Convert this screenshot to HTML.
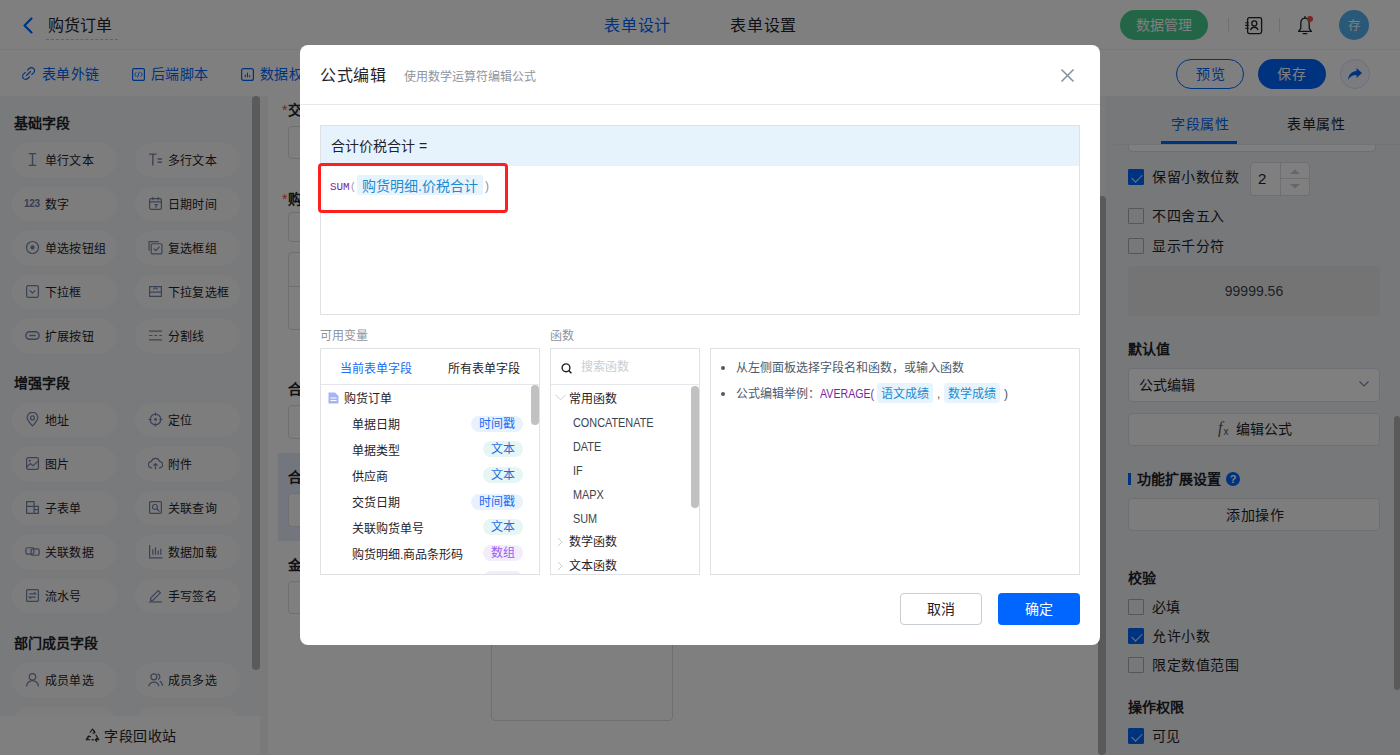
<!DOCTYPE html>
<html lang="zh-CN"><head><meta charset="utf-8">
<style>
*{box-sizing:border-box;margin:0;padding:0}
html,body{width:1400px;height:755px;overflow:hidden;background:#fff}
body{position:relative;font-family:"Liberation Sans",sans-serif;color:#1f2329}
.a{position:absolute}
.t{position:absolute;white-space:nowrap;line-height:20px;height:20px}
/* header */
#hdr{left:0;top:0;width:1400px;height:50px;background:#fff;border-bottom:1px solid #f0f1f3}
#tb{left:0;top:50px;width:1400px;height:46px;background:#fff}
#lp{left:0;top:96px;width:260px;height:659px;background:#f3f4f6}
.pill{position:absolute;width:105px;height:34px;border-radius:17px;background:#fbfbfc}
.pill .ic{position:absolute;left:13px;top:9px;width:15px;height:15px}
.pill .tx{position:absolute;left:33px;top:7.5px;font-size:12px;letter-spacing:0.2px;line-height:20px;white-space:nowrap;color:#1f2329}
.sec{position:absolute;left:14px;font-size:14px;font-weight:bold;line-height:20px;white-space:nowrap;color:#1f2329}
#cv{left:260px;top:96px;width:846px;height:659px;background:#f4f5f7}
#card{left:268px;top:96px;width:830px;height:659px;background:#fff}
#rp{left:1106px;top:96px;width:294px;height:659px;background:#eff0f2}
.cb{position:absolute;width:16px;height:16px;border:1px solid #a8adb5;border-radius:1px;background:transparent}
.cb.on{background:#0066ff;border-color:#0066ff}
.cb.on:after{content:"";position:absolute;left:4.5px;top:1.5px;width:5px;height:9px;border:solid #e8ecf5;border-width:0 1.8px 1.8px 0;transform:rotate(45deg)}
.rt{position:absolute;left:1152px;font-size:14px;line-height:20px;white-space:nowrap;color:#1f2329}
.rh{position:absolute;left:1128px;font-size:14px;font-weight:bold;line-height:20px;white-space:nowrap;color:#1f2329}
.rbtn{position:absolute;left:1128px;width:252px;height:33px;border:1px solid #dcdfe6;border-radius:4px;background:#fafafa}
#mask{left:0;top:0;width:1400px;height:755px;background:rgba(0,0,0,.5)}
#modal{left:300px;top:45px;width:800px;height:600px;background:#fff;border-radius:8px}
.box{position:absolute;border:1px solid #dfe1e5;background:#fff}
.tag{position:absolute;height:16px;line-height:17px;border-radius:8px;font-size:12px;text-align:center;white-space:nowrap}
.tag.ts{background:#e8f1fe;color:#1a6cf5}
.tag.wb{background:#e6f6f4;color:#1f6fe0}
.tag.sz{background:#f2ecfd;color:#9a5ef0}
.vr{position:absolute;left:352px;font-size:12px;line-height:20px;margin-top:1px;white-space:nowrap;color:#1f2329}
.fn{position:absolute;left:573px;font-size:12.5px;line-height:20px;white-space:nowrap;color:#3d434b;margin-top:1px;transform:scaleX(.87);transform-origin:0 0}
</style></head>
<body>
<!-- ===== HEADER ===== -->
<div id="hdr" class="a"></div>
<svg class="a" style="left:22px;top:17px" width="12" height="17" viewBox="0 0 12 17"><path d="M9.5 1.5 L2.5 8.5 L9.5 15.5" fill="none" stroke="#0066ff" stroke-width="2.2" stroke-linecap="round" stroke-linejoin="round"/></svg>
<div class="t" style="left:48px;top:16px;font-size:16px;letter-spacing:0px;color:#1f2329">购货订单</div>
<div class="a" style="left:46px;top:39px;width:72px;border-top:1px dashed #c0c4cc"></div>
<div class="t" style="left:604px;top:16px;font-size:16px;letter-spacing:0.8px;color:#0066ff">表单设计</div>
<div class="t" style="left:730px;top:16px;font-size:16px;letter-spacing:0.8px;color:#1f2329">表单设置</div>
<div class="a" style="left:1120px;top:10px;width:88px;height:30px;border-radius:15px;background:#44cc8e"></div>
<div class="t" style="left:1136px;top:15px;font-size:14px;letter-spacing:0px;color:#fff">数据管理</div>
<div class="a" style="left:1228px;top:18px;width:1px;height:14px;background:#dcdfe6"></div>
<svg class="a" style="left:1244px;top:16px" width="20" height="19" viewBox="0 0 20 19"><rect x="3.6" y="1.6" width="14" height="16" rx="1.8" fill="none" stroke="#1f2329" stroke-width="1.3"/><circle cx="10.3" cy="7.4" r="2.5" fill="none" stroke="#1f2329" stroke-width="1.3"/><path d="M6.6 14.2 A3.8 3.8 0 0 1 14 14.2" fill="none" stroke="#1f2329" stroke-width="1.3"/><path d="M1.2 6.7h3.6M1.2 9.4h3.6M1.2 12.2h3.6" stroke="#1f2329" stroke-width="1.1"/></svg>
<div class="a" style="left:1279px;top:18px;width:1px;height:14px;background:#dcdfe6"></div>
<svg class="a" style="left:1296px;top:15px" width="18" height="20" viewBox="0 0 18 20"><path d="M9 3.2 C6 3.2 4.8 5.4 4.8 8.6 L4.8 13.4 L2.6 16.4 L15.4 16.4 L13.2 13.4 L13.2 8.6 C13.2 5.4 12 3.2 9 3.2Z" fill="none" stroke="#1f2329" stroke-width="1.3" stroke-linejoin="round"/><path d="M7.2 18.6h3.6" stroke="#1f2329" stroke-width="1.3" stroke-linecap="round"/><path d="M9 1.6v1.4" stroke="#1f2329" stroke-width="1.3" stroke-linecap="round"/></svg>
<div class="a" style="left:1306.8px;top:15.8px;width:6.4px;height:6.4px;border-radius:50%;background:#f54a45"></div>
<div class="a" style="left:1339px;top:10px;width:30px;height:30px;border-radius:50%;background:#52b0f2"></div>
<div class="t" style="left:1348px;top:16px;font-size:12.5px;color:#fff">存</div>

<div id="tb" class="a"></div>
<svg class="a" style="left:22px;top:67px" width="13" height="13" viewBox="0 0 13 13"><path d="M5.5 3.2 L7.2 1.5 C8.4 0.3 10.5 0.3 11.6 1.5 C12.7 2.6 12.7 4.6 11.6 5.8 L9.8 7.5" fill="none" stroke="#0066ff" stroke-width="1.1" stroke-linecap="round"/><path d="M7.5 9.8 L5.8 11.5 C4.6 12.7 2.6 12.7 1.5 11.5 C0.3 10.4 0.3 8.4 1.5 7.2 L3.2 5.5" fill="none" stroke="#0066ff" stroke-width="1.1" stroke-linecap="round"/><path d="M4.5 8.5 L8.5 4.5" stroke="#0066ff" stroke-width="1.1" stroke-linecap="round"/></svg>
<div class="t" style="left:42px;top:63.5px;font-size:14px;letter-spacing:0.4px;color:#0066ff">表单外链</div>
<svg class="a" style="left:132px;top:68px" width="13" height="13" viewBox="0 0 13 13"><rect x="0.6" y="0.6" width="11.8" height="11.8" rx="1.2" fill="none" stroke="#0066ff" stroke-width="1.2"/><path d="M4.3 4.2L2.6 6.5 4.3 8.8M8.7 4.2L10.4 6.5 8.7 8.8M7.4 3.6L5.6 9.4" fill="none" stroke="#0066ff" stroke-width="0.9"/></svg>
<div class="t" style="left:151px;top:63.5px;font-size:14px;letter-spacing:0.4px;color:#0066ff">后端脚本</div>
<svg class="a" style="left:241px;top:68px" width="13" height="13" viewBox="0 0 13 13"><rect x="0.6" y="0.6" width="11.8" height="11.8" rx="2" fill="none" stroke="#0066ff" stroke-width="1.2"/><path d="M4.3 9.3V6.8M6.5 9.3V4.8M8.7 9.3V7.3" stroke="#0066ff" stroke-width="1.1"/></svg>
<div class="t" style="left:260px;top:63.5px;font-size:14px;letter-spacing:0.4px;color:#0066ff">数据权限</div>
<div class="a" style="left:1176px;top:59px;width:68px;height:30px;border-radius:15px;border:1px solid #0066ff;background:#fff"></div>
<div class="t" style="left:1196px;top:64px;font-size:14px;letter-spacing:0.5px;color:#0066ff">预览</div>
<div class="a" style="left:1258px;top:59px;width:68px;height:30px;border-radius:15px;background:#0066ff"></div>
<div class="t" style="left:1277px;top:64px;font-size:14px;letter-spacing:0.5px;color:#fff">保存</div>
<div class="a" style="left:1340px;top:59px;width:30px;height:30px;border-radius:50%;border:1px solid #d4e1fb;background:#f7f9fe"></div>
<svg class="a" style="left:1346px;top:65px" width="18" height="18" viewBox="0 0 18 18"><path d="M10.5 3 L16 8 L10.5 13 L10.5 10 C6.5 10 4 11.5 2 15 C2.5 10 5 6.5 10.5 6 Z" fill="#0066ff"/></svg>
<div id="lp" class="a"></div>
<div class="sec" style="top:113px">基础字段</div>
<div class="pill" style="left:12px;top:143px"><svg class="ic" viewBox="0 0 14 14"><path d="M3.5 1.5h7M7 1.5v11M3.5 12.5h7" stroke="#7585ad" stroke-width="1.3" fill="none"/></svg><div class="tx">单行文本</div></div>
<div class="pill" style="left:135px;top:143px"><svg class="ic" viewBox="0 0 14 14"><path d="M1 2h7M4.5 2v10.5M9 6.5h4M9 9.5h4" stroke="#7585ad" stroke-width="1.3" fill="none"/></svg><div class="tx">多行文本</div></div>
<div class="pill" style="left:12px;top:187px"><div class="ic" style="font-family:'Liberation Sans',sans-serif;font-size:10px;font-weight:700;color:#6e7ca3;line-height:14px;left:12px;top:9.5px;width:auto;letter-spacing:-0.3px">123</div><div class="tx">数字</div></div>
<div class="pill" style="left:135px;top:187px"><svg class="ic" viewBox="0 0 14 14"><rect x="1.5" y="2.5" width="11" height="10" rx="1.5" stroke="#7585ad" stroke-width="1.15" fill="none"/><path d="M1.5 5.5h11M4.5 1v3M9.5 1v3M6 8h2.5l-1.5 3" stroke="#7585ad" stroke-width="1.1" fill="none"/></svg><div class="tx">日期时间</div></div>
<div class="pill" style="left:12px;top:231px"><svg class="ic" viewBox="0 0 14 14"><circle cx="7" cy="7" r="5.6" stroke="#7585ad" stroke-width="1.15" fill="none"/><circle cx="7" cy="7" r="2" fill="#7585ad"/></svg><div class="tx">单选按钮组</div></div>
<div class="pill" style="left:135px;top:231px"><svg class="ic" viewBox="0 0 14 14"><path d="M1 10V1.5h9" stroke="#7585ad" stroke-width="1.1" fill="none"/><rect x="3" y="3.5" width="10" height="9.5" rx="1" stroke="#7585ad" stroke-width="1.15" fill="none"/><path d="M5.3 8l2 2 3.5-3.8" stroke="#7585ad" stroke-width="1.15" fill="none"/></svg><div class="tx">复选框组</div></div>
<div class="pill" style="left:12px;top:275px"><svg class="ic" viewBox="0 0 14 14"><rect x="1.5" y="1.5" width="11" height="11" rx="1.5" stroke="#7585ad" stroke-width="1.15" fill="none"/><path d="M4.5 6l2.5 2.5 2.5-2.5" stroke="#7585ad" stroke-width="1.15" fill="none"/></svg><div class="tx">下拉框</div></div>
<div class="pill" style="left:135px;top:275px"><svg class="ic" viewBox="0 0 14 14"><path d="M1.5 2.5h11v5h-11z" stroke="#7585ad" stroke-width="1.15" fill="none"/><path d="M1.5 7.5v4h11v-4M5 5l2-1.5 2 1.5" stroke="#7585ad" stroke-width="1.1" fill="none"/></svg><div class="tx">下拉复选框</div></div>
<div class="pill" style="left:12px;top:319px"><svg class="ic" viewBox="0 0 14 14"><rect x="0.8" y="3.5" width="12.4" height="7" rx="3.5" stroke="#7585ad" stroke-width="1.3" fill="none"/><path d="M4 7h6" stroke="#7585ad" stroke-width="1.3"/></svg><div class="tx">扩展按钮</div></div>
<div class="pill" style="left:135px;top:319px"><svg class="ic" viewBox="0 0 14 14"><path d="M1 3h12M1 11h12M1 7h3M6 7h2.5M10.5 7h2.5" stroke="#7585ad" stroke-width="1.15" fill="none"/></svg><div class="tx">分割线</div></div>
<div class="sec" style="top:373px">增强字段</div>
<div class="pill" style="left:12px;top:403px"><svg class="ic" viewBox="0 0 14 14"><path d="M7 13C4 9.8 2 7.5 2 5.3A5 5 0 0 1 12 5.3C12 7.5 10 9.8 7 13Z" stroke="#7585ad" stroke-width="1.15" fill="none"/><circle cx="7" cy="5.5" r="1.8" stroke="#7585ad" stroke-width="1.15" fill="none"/></svg><div class="tx">地址</div></div>
<div class="pill" style="left:135px;top:403px"><svg class="ic" viewBox="0 0 14 14"><circle cx="7" cy="7" r="5" stroke="#7585ad" stroke-width="1.15" fill="none"/><circle cx="7" cy="7" r="1.3" fill="#7585ad"/><path d="M7 0.5v3M7 10.5v3M0.5 7h3M10.5 7h3" stroke="#7585ad" stroke-width="1.15"/></svg><div class="tx">定位</div></div>
<div class="pill" style="left:12px;top:447px"><svg class="ic" viewBox="0 0 14 14"><rect x="1.5" y="1.5" width="11" height="11" rx="1.5" stroke="#7585ad" stroke-width="1.15" fill="none"/><path d="M1.5 10.5l3.5-3.5 2.5 2 5-4.5" stroke="#7585ad" stroke-width="1.1" fill="none"/><circle cx="4.5" cy="4.5" r="1" fill="#7585ad"/></svg><div class="tx">图片</div></div>
<div class="pill" style="left:135px;top:447px"><svg class="ic" viewBox="0 0 14 14"><path d="M4 11H3.5A3 3 0 0 1 3.2 5 4 4 0 0 1 10.8 5 3 3 0 0 1 10.5 11H10" stroke="#7585ad" stroke-width="1.15" fill="none"/><path d="M7 12.5V7M5 9l2-2 2 2" stroke="#7585ad" stroke-width="1.15" fill="none"/></svg><div class="tx">附件</div></div>
<div class="pill" style="left:12px;top:491px"><svg class="ic" viewBox="0 0 14 14"><path d="M1.5 1.5h7v11h-7zM1.5 6h7M8.5 6h4v6.5h-4M8.5 9h4" stroke="#7585ad" stroke-width="1.15" fill="none"/></svg><div class="tx">子表单</div></div>
<div class="pill" style="left:135px;top:491px"><svg class="ic" viewBox="0 0 14 14"><rect x="1.5" y="1.5" width="11" height="11" rx="1" stroke="#7585ad" stroke-width="1.15" fill="none"/><circle cx="6.5" cy="6.5" r="2.3" stroke="#7585ad" stroke-width="1.1" fill="none"/><path d="M8.2 8.2l2.5 2.5" stroke="#7585ad" stroke-width="1.15"/></svg><div class="tx">关联查询</div></div>
<div class="pill" style="left:12px;top:535px"><svg class="ic" viewBox="0 0 14 14"><rect x="0.8" y="3.5" width="7.5" height="6" rx="1.5" stroke="#7585ad" stroke-width="1.15" fill="none"/><rect x="5.7" y="4.5" width="7.5" height="6" rx="1.5" stroke="#7585ad" stroke-width="1.15" fill="none"/></svg><div class="tx">关联数据</div></div>
<div class="pill" style="left:135px;top:535px"><svg class="ic" viewBox="0 0 14 14"><path d="M1.5 1v12h12M4.5 10V5M7 10V3M9.5 10V6M12 10V4.5" stroke="#7585ad" stroke-width="1.15" fill="none"/></svg><div class="tx">数据加载</div></div>
<div class="pill" style="left:12px;top:579px"><svg class="ic" viewBox="0 0 14 14"><rect x="1.5" y="1.5" width="11" height="11" rx="1" stroke="#7585ad" stroke-width="1.15" fill="none"/><path d="M4 5.5h6l-1.5-1.5M10 8.5H4l1.5 1.5" stroke="#7585ad" stroke-width="1.1" fill="none"/></svg><div class="tx">流水号</div></div>
<div class="pill" style="left:135px;top:579px"><svg class="ic" viewBox="0 0 14 14"><path d="M2.5 9.5L9.5 2.5l2 2-7 7H2.5z" stroke="#7585ad" stroke-width="1.15" fill="none"/><path d="M1 13h12" stroke="#7585ad" stroke-width="1.15"/></svg><div class="tx">手写签名</div></div>
<div class="sec" style="top:633px">部门成员字段</div>
<div class="pill" style="left:12px;top:663px"><svg class="ic" viewBox="0 0 14 14"><circle cx="7" cy="4.5" r="3" stroke="#7585ad" stroke-width="1.15" fill="none"/><path d="M1.5 13.5A5.5 5.5 0 0 1 12.5 13.5" stroke="#7585ad" stroke-width="1.15" fill="none"/></svg><div class="tx">成员单选</div></div>
<div class="pill" style="left:135px;top:663px"><svg class="ic" viewBox="0 0 14 14"><circle cx="5.5" cy="4.5" r="2.8" stroke="#7585ad" stroke-width="1.15" fill="none"/><path d="M0.8 13.3A4.8 4.8 0 0 1 10.2 13.3M9 1.8A2.8 2.8 0 0 1 9.5 7M11 8.5A4.8 4.8 0 0 1 13.5 13" stroke="#7585ad" stroke-width="1.15" fill="none"/></svg><div class="tx">成员多选</div></div>
<div class="pill" style="left:12px;top:707px"></div>
<div class="pill" style="left:135px;top:707px"></div>
<div class="a" style="left:252px;top:96px;width:8px;height:574px;border-radius:4px;background:#b4b4b4"></div>
<div class="a" style="left:0;top:716px;width:260px;height:39px;background:#fff"></div>
<svg class="a" style="left:85px;top:728px" width="15" height="15" viewBox="0 0 15 15"><path d="M5.2 4.2L7.5 1 9.8 4.6M9.3 2.8l0.6 1.9-1.9 0.4M11 7l2.8 4.8-3.6 0M4.8 11.8H1.2L3.4 8M3 10.3L3.4 8 5.4 8.6M12 10.2L10.2 11.8 11.8 13.4" stroke="#1f2329" stroke-width="1.1" fill="none" stroke-linejoin="round" stroke-linecap="round"/><path d="M6.5 11.8h2.5" stroke="#1f2329" stroke-width="1.1"/></svg>
<div class="t" style="left:104px;top:726px;font-size:14px;letter-spacing:0.5px;color:#1f2329">字段回收站</div>
<div id="cv" class="a"></div>
<div id="card" class="a"></div>
<!-- canvas form (mostly under modal) -->
<div class="t" style="left:282px;top:100px;font-size:14px;color:#f54a45">*</div>
<div class="t" style="left:288px;top:100px;font-size:14px;font-weight:bold;color:#1f2329">交货日期</div>
<div class="a" style="left:288px;top:126px;width:400px;height:33px;border:1px solid #dcdfe6;border-radius:4px"></div>
<div class="t" style="left:282px;top:189px;font-size:14px;color:#f54a45">*</div>
<div class="t" style="left:288px;top:189px;font-size:14px;font-weight:bold;color:#1f2329">购货明细</div>
<div class="a" style="left:288px;top:212px;width:400px;height:30px;border:1px solid #dcdfe6;border-radius:4px"></div>
<div class="a" style="left:288px;top:252px;width:800px;height:78px;border:1px solid #dcdfe6;border-radius:4px"></div>
<div class="a" style="left:288px;top:286px;width:800px;height:1px;background:#dcdfe6"></div>
<div class="t" style="left:288px;top:379px;font-size:14px;font-weight:bold;color:#1f2329">合计数量</div>
<div class="a" style="left:288px;top:405px;width:400px;height:34px;border:1px solid #dcdfe6;border-radius:4px"></div>
<div class="a" style="left:278px;top:453px;width:810px;height:88px;background:#e6eefb"></div>
<div class="t" style="left:288px;top:467px;font-size:14px;font-weight:bold;color:#1f2329">合计价税合计</div>
<div class="a" style="left:288px;top:493px;width:400px;height:34px;border:1px solid #dcdfe6;border-radius:4px;background:#fff"></div>
<div class="t" style="left:288px;top:555px;font-size:14px;font-weight:bold;color:#1f2329">金额</div>
<div class="a" style="left:288px;top:581px;width:400px;height:33px;border:1px solid #dcdfe6;border-radius:4px"></div>
<div class="a" style="left:491px;top:600px;width:182px;height:121px;border:1px solid #dcdfe6;border-radius:4px"></div>
<div class="a" style="left:1098px;top:196px;width:8px;height:559px;border-radius:4px;background:#b4b4b4"></div>

<div id="rp" class="a"></div>
<div class="a" style="left:1128px;top:120px;width:248px;height:32px;border:1px solid #dcdfe6;border-radius:4px;background:#fff"></div>
<div class="a" style="left:1106px;top:96px;width:294px;height:48px;background:#eff0f2"></div>
<div class="t" style="left:1171px;top:114px;font-size:14px;letter-spacing:0.5px;color:#0066ff">字段属性</div>
<div class="t" style="left:1287px;top:114px;font-size:14px;letter-spacing:0.5px;color:#1f2329">表单属性</div>
<div class="a" style="left:1114px;top:144px;width:286px;height:1px;background:#e5e6eb"></div>
<div class="a" style="left:1161px;top:141px;width:76px;height:3px;background:#0066ff"></div>
<div class="cb on" style="left:1128px;top:169px"></div>
<div class="rt" style="top:167px;letter-spacing:0.5px">保留小数位数</div>
<div class="a" style="left:1250px;top:162px;width:60px;height:34px;border:1px solid #dcdfe6;border-radius:4px;background:#fff"></div>
<div class="a" style="left:1280px;top:162px;width:1px;height:34px;background:#dcdfe6"></div>
<div class="a" style="left:1280px;top:178px;width:30px;height:1px;background:#dcdfe6"></div>
<svg class="a" style="left:1288px;top:167px" width="14" height="24" viewBox="0 0 14 24"><path d="M2 7L7 2.5 12 7z M2 17L7 21.5 12 17z" fill="#c9cdd4"/></svg>
<div class="t" style="left:1258px;top:169px;font-size:15px;color:#1f2329">2</div>
<div class="cb" style="left:1128px;top:208px"></div>
<div class="rt" style="top:206px;letter-spacing:0.5px">不四舍五入</div>
<div class="cb" style="left:1128px;top:238px"></div>
<div class="rt" style="top:236px;letter-spacing:0.5px">显示千分符</div>
<div class="a" style="left:1128px;top:266px;width:252px;height:50px;border-radius:4px;background:#e8e9eb"></div>
<div class="t" style="left:1128px;top:281px;width:252px;text-align:center;font-size:14px;color:#3e434a">99999.56</div>
<div class="rh" style="top:339px">默认值</div>
<div class="a" style="left:1128px;top:368px;width:252px;height:34px;border:1px solid #dcdfe6;border-radius:4px;background:#fff"></div>
<div class="t" style="left:1139px;top:375px;font-size:14px;letter-spacing:0px;color:#1f2329">公式编辑</div>
<svg class="a" style="left:1358px;top:380px" width="12" height="8" viewBox="0 0 12 8"><path d="M1.5 1.5L6 6 10.5 1.5" stroke="#7585ad" stroke-width="1.15" fill="none"/></svg>
<div class="rbtn" style="top:413px"></div>
<div class="t" style="left:1218px;top:418px;font-size:16px;font-style:italic;font-family:'Liberation Serif',serif;color:#4e5969">f<span style="font-size:10px;font-style:normal;font-family:'Liberation Sans',sans-serif;position:relative;top:2px;left:1px">x</span></div>
<div class="t" style="left:1236px;top:419px;font-size:14px;letter-spacing:0px;color:#1f2329">编辑公式</div>
<div class="a" style="left:1128px;top:473px;width:3px;height:12px;background:#0066ff"></div>
<div class="rh" style="left:1137px;top:469px">功能扩展设置</div>
<div class="a" style="left:1226px;top:472px;width:14px;height:14px;border-radius:50%;background:#0066ff;color:#fff;font-size:11px;font-weight:bold;line-height:14px;text-align:center">?</div>
<div class="rbtn" style="top:498px"></div>
<div class="t" style="left:1226px;top:505px;font-size:14px;letter-spacing:0.5px;color:#1f2329">添加操作</div>
<div class="rh" style="top:568px">校验</div>
<div class="cb" style="left:1128px;top:599px"></div>
<div class="rt" style="top:597px">必填</div>
<div class="cb on" style="left:1128px;top:628px"></div>
<div class="rt" style="top:626px;letter-spacing:0.5px">允许小数</div>
<div class="cb" style="left:1128px;top:657px"></div>
<div class="rt" style="top:655px;letter-spacing:0.5px">限定数值范围</div>
<div class="rh" style="top:697px">操作权限</div>
<div class="cb on" style="left:1128px;top:728px"></div>
<div class="rt" style="top:726px">可见</div>
<div class="a" style="left:1394px;top:416px;width:6px;height:274px;border-radius:3px;background:#b4b4b4"></div>

<div id="mask" class="a"></div>
<div id="modal" class="a"></div>
<div class="t" style="left:320px;top:66px;font-size:16px;letter-spacing:0.5px;color:#1f2329">公式编辑</div>
<div class="t" style="left:404px;top:67px;font-size:12px;color:#8f959e">使用数学运算符编辑公式</div>
<svg class="a" style="left:1060px;top:68px" width="15" height="15" viewBox="0 0 15 15"><path d="M1.5 1.5L13.5 13.5M13.5 1.5L1.5 13.5" stroke="#86909c" stroke-width="1.5"/></svg>
<div class="a" style="left:300px;top:104px;width:800px;height:1px;background:#e8e8e8"></div>
<div class="box" style="left:320px;top:125px;width:760px;height:190px"></div>
<div class="a" style="left:321px;top:126px;width:758px;height:40px;background:#e6f3fd"></div>
<div class="t" style="left:331px;top:136px;font-size:14px;color:#1f2329">合计价税合计 =</div>
<div class="t" style="left:330px;top:177px;font-size:11.5px;font-family:'Liberation Mono',monospace;color:#7b1fa2;transform:scaleX(.95);transform-origin:0 0">SUM<span style="color:#9aa0a8">(</span></div>
<div class="a" style="left:357px;top:175px;width:126px;height:20px;border-radius:2px;background:#e8f4fd"></div>
<div class="t" style="left:362px;top:176px;font-size:14px;color:#1b8bd0">购货明细.价税合计</div>
<div class="t" style="left:485px;top:176px;font-size:12px;color:#8f959e">)</div>
<div class="a" style="left:318px;top:163px;width:190px;height:50px;border:3px solid #ff1f1f;border-radius:4px"></div>
<div class="t" style="left:320px;top:326px;font-size:12px;color:#8f959e">可用变量</div>
<div class="t" style="left:550px;top:326px;font-size:12px;color:#8f959e">函数</div>
<div class="box" style="left:320px;top:348px;width:220px;height:227px"></div>
<div class="a" style="left:321px;top:384px;width:218px;height:1px;background:#e5e6eb"></div>
<div class="t" style="left:340px;top:358.5px;font-size:12px;color:#1a6cf5">当前表单字段</div>
<div class="t" style="left:448px;top:358.5px;font-size:12px;color:#1f2329">所有表单字段</div>
<svg class="a" style="left:328px;top:392px" width="11" height="12" viewBox="0 0 11 12"><path d="M0.5 0.5h6.5l3.5 3.5v7.5h-10z" fill="#a5b4f5"/><path d="M2.5 6h6M2.5 8.5h6" stroke="#fff" stroke-width="1.1"/></svg>
<div class="t" style="left:344px;top:389px;font-size:12px;color:#1f2329">购货订单</div>
<div class="vr" style="top:414px">单据日期</div><div class="tag ts" style="left:471px;top:416px;width:52px">时间戳</div>
<div class="vr" style="top:440px">单据类型</div><div class="tag wb" style="left:483px;top:441px;width:40px">文本</div>
<div class="vr" style="top:466px">供应商</div><div class="tag wb" style="left:483px;top:467px;width:40px">文本</div>
<div class="vr" style="top:492px">交货日期</div><div class="tag ts" style="left:471px;top:494px;width:52px">时间戳</div>
<div class="vr" style="top:518px">关联购货单号</div><div class="tag wb" style="left:483px;top:519px;width:40px">文本</div>
<div class="vr" style="top:544px">购货明细.商品条形码</div><div class="tag sz" style="left:483px;top:545px;width:40px">数组</div>
<div class="a" style="left:321px;top:568px;width:218px;height:6px;overflow:hidden"><div class="tag sz" style="left:162px;top:3px;width:40px"></div></div>
<div class="a" style="left:531px;top:385px;width:8px;height:40px;border-radius:4px;background:#c1c1c1"></div>
<div class="box" style="left:550px;top:348px;width:150px;height:227px"></div>
<div class="a" style="left:551px;top:384px;width:148px;height:1px;background:#e5e6eb"></div>
<svg class="a" style="left:561px;top:363px" width="12" height="11" viewBox="0 0 12 11"><circle cx="5" cy="4.8" r="3.9" stroke="#1f2329" stroke-width="1.4" fill="none"/><path d="M7.8 7.6l2.6 2.6" stroke="#1f2329" stroke-width="1.5"/></svg>
<div class="t" style="left:581px;top:357px;font-size:12px;color:#c9cdd4">搜索函数</div>
<svg class="a" style="left:555px;top:394px" width="11" height="7" viewBox="0 0 11 7"><path d="M0.5 0.8L5.5 5.8 10.5 0.8" stroke="#c9cdd4" stroke-width="1" fill="none"/></svg>
<div class="t" style="left:569px;top:389px;font-size:12px;color:#1f2329">常用函数</div>
<div class="fn" style="top:412px">CONCATENATE</div>
<div class="fn" style="top:436px">DATE</div>
<div class="fn" style="top:460px">IF</div>
<div class="fn" style="top:484px">MAPX</div>
<div class="fn" style="top:508px">SUM</div>
<svg class="a" style="left:557px;top:537px" width="6" height="10" viewBox="0 0 6 10"><path d="M0.8 0.8L5 5 0.8 9.2" stroke="#c9cdd4" stroke-width="1" fill="none"/></svg>
<div class="t" style="left:569px;top:532px;font-size:12px;color:#1f2329">数学函数</div>
<svg class="a" style="left:557px;top:561px" width="6" height="10" viewBox="0 0 6 10"><path d="M0.8 0.8L5 5 0.8 9.2" stroke="#c9cdd4" stroke-width="1" fill="none"/></svg>
<div class="t" style="left:569px;top:556px;font-size:12px;color:#1f2329">文本函数</div>
<div class="a" style="left:691px;top:386px;width:8px;height:122px;border-radius:4px;background:#c1c1c1"></div>
<div class="box" style="left:710px;top:348px;width:370px;height:227px"></div>
<div class="a" style="left:721px;top:366px;width:4px;height:4px;border-radius:50%;background:#4e5969"></div>
<div class="t" style="left:736px;top:358px;font-size:12px;color:#4e5969">从左侧面板选择字段名和函数，或输入函数</div>
<div class="a" style="left:721px;top:392px;width:4px;height:4px;border-radius:50%;background:#4e5969"></div>
<div class="t" style="left:736px;top:384px;font-size:12px;color:#4e5969">公式编辑举例：</div><div class="t" style="left:820px;top:384px;font-size:12.5px;color:#7b1fa2;transform:scaleX(.85);transform-origin:0 0">AVERAGE(</div>
<div class="a" style="left:877px;top:383px;width:56px;height:20px;border-radius:3px;background:#e8f4fd"></div>
<div class="t" style="left:881px;top:384px;font-size:12px;color:#1b8bd0">语文成绩</div>
<div class="t" style="left:937px;top:384px;font-size:12px;color:#4e5969">,</div>
<div class="a" style="left:944px;top:383px;width:56px;height:20px;border-radius:3px;background:#e8f4fd"></div>
<div class="t" style="left:948px;top:384px;font-size:12px;color:#1b8bd0">数学成绩</div>
<div class="t" style="left:1004px;top:384px;font-size:12px;color:#4e5969">)</div>
<div class="a" style="left:900px;top:593px;width:82px;height:32px;border:1px solid #c9cdd4;border-radius:4px;background:#fff"></div>
<div class="t" style="left:900px;top:599px;width:82px;text-align:center;font-size:14px;color:#1f2329">取消</div>
<div class="a" style="left:998px;top:593px;width:82px;height:32px;border-radius:4px;background:#0066ff"></div>
<div class="t" style="left:998px;top:599px;width:82px;text-align:center;font-size:14px;color:#fff">确定</div>
</body></html>
